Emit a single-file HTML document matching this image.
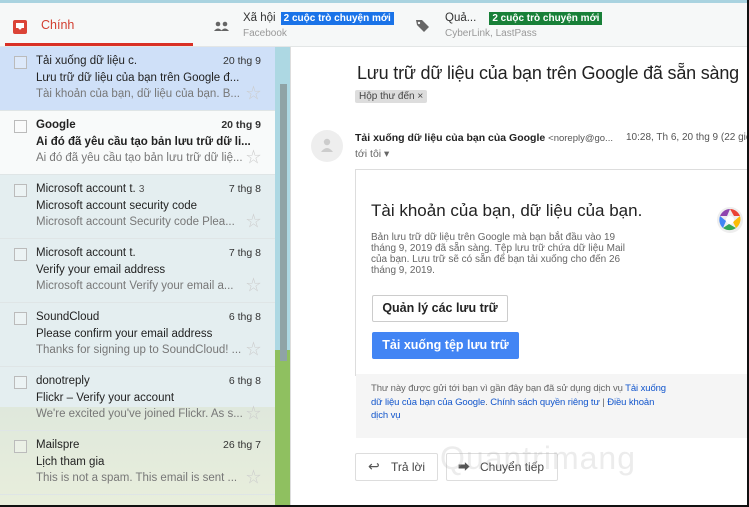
<!DOCTYPE html>
<html><head><meta charset="utf-8"><style>
*{box-sizing:border-box;margin:0;padding:0}
body{width:749px;height:507px;overflow:hidden;background:#fff;font-family:"Liberation Sans","Noto Sans CJK SC",sans-serif;position:relative}
.abs{position:absolute}
.top{left:0;top:0;width:749px;height:3px;background:#a9d3e0}
.tabs{left:0;top:3px;width:749px;height:44px;background:#f6f8f8;border-bottom:1px solid #e3e6e6}
.row{position:absolute;left:0;width:275px;height:64px;border-bottom:1px solid #dfe5e6;font-size:11.5px}
.cb{position:absolute;left:14px;top:9px;width:13px;height:13px;border:1px solid #bbb;background:rgba(255,255,255,.3)}
.s{position:absolute;left:36px;top:8px;color:#222}
.d{position:absolute;right:14px;top:8px;font-size:10.5px;color:#333}
.sub{position:absolute;left:36px;top:25px;color:#222;white-space:nowrap}
.sn{position:absolute;left:36px;top:41px;color:#777;white-space:nowrap}
.st{position:absolute;left:246px;top:35px;color:#ccc;font-size:15px}
b{font-weight:bold}
.badge{display:inline-block;color:#fff;font-size:10px;font-weight:bold;padding:1px 3px;margin-left:5px}
</style></head><body>
<div class="abs top"></div>
<div class="abs tabs">
 <svg class="abs" style="left:12px;top:16px" width="16" height="16"><rect x="1" y="1" width="14" height="14" rx="2" fill="#db4437"/><path d="M4 4h8v5h-2.5a1.5 1.5 0 0 1-3 0H4z" fill="#fff"/></svg>
 <div class="abs" style="left:41px;top:15px;color:#d23f31;font-size:12.5px">Chính</div>
 <div class="abs" style="left:5px;top:40px;width:188px;height:3px;background:#d93025"></div>
 <svg class="abs" style="left:214px;top:18px" width="16" height="10"><circle cx="4" cy="3" r="2.3" fill="#666"/><circle cx="11" cy="3" r="2.3" fill="#666"/><path d="M0 10q4-5 8 0zM7 10q4-5 8 0z" fill="#666"/></svg>
 <div class="abs" style="left:243px;top:9px;font-size:11.5px;color:#333">Xã hội<span class="badge" style="background:#1a73e8">2 cuộc trò chuyện mới</span></div>
 <div class="abs" style="left:243px;top:25px;font-size:10px;color:#999">Facebook</div>
 <svg class="abs" style="left:415px;top:16px" width="16" height="14"><path d="M1 1h6l7 7-5 5-7-7z" fill="#666"/><circle cx="4" cy="4" r="1.2" fill="#f6f8f8"/></svg>
 <div class="abs" style="left:445px;top:9px;font-size:11.5px;color:#333">Quả...<span class="badge" style="background:#188038;margin-left:13px">2 cuộc trò chuyện mới</span></div>
 <div class="abs" style="left:445px;top:25px;font-size:10px;color:#999">CyberLink, LastPass</div>
</div>
<div class="abs" style="left:0;top:47px;width:275px;height:458px;background:linear-gradient(#e4eef0 0,#e4eef0 360px,#dfe8dc 360px,#e8eedc 458px)"></div>
<div class="abs" style="left:275px;top:47px;width:15px;height:458px;background:#add8e3"></div>
<div class="abs" style="left:275px;top:350px;width:15px;height:155px;background:#8fc060"></div>
<div class="abs" style="left:280px;top:84px;width:7px;height:277px;background:#8fa3a6"></div>
<div class="abs" style="left:290px;top:47px;width:1px;height:458px;background:#ddd"></div>

<div class="row" style="top:47px;background:#cfe0f8"><div class="cb"></div><div class="s">Tải xuống dữ liệu c.</div><div class="d">20 thg 9</div><div class="sub">Lưu trữ dữ liệu của bạn trên Google đ...</div><div class="sn">Tài khoản của bạn, dữ liệu của bạn. B...</div><div class="st">☆</div></div>
<div class="row" style="top:111px;background:#f8fafa"><div class="cb"></div><div class="s"><b>Google</b></div><div class="d"><b>20 thg 9</b></div><div class="sub"><b>Ai đó đã yêu cầu tạo bản lưu trữ dữ li...</b></div><div class="sn">Ai đó đã yêu cầu tạo bản lưu trữ dữ liệ...</div><div class="st">☆</div></div>
<div class="row" style="top:175px"><div class="cb"></div><div class="s">Microsoft account t. <span style="font-size:10px;color:#555">3</span></div><div class="d">7 thg 8</div><div class="sub">Microsoft account security code</div><div class="sn">Microsoft account Security code Plea...</div><div class="st">☆</div></div>
<div class="row" style="top:239px"><div class="cb"></div><div class="s">Microsoft account t.</div><div class="d">7 thg 8</div><div class="sub">Verify your email address</div><div class="sn">Microsoft account Verify your email a...</div><div class="st">☆</div></div>
<div class="row" style="top:303px"><div class="cb"></div><div class="s">SoundCloud</div><div class="d">6 thg 8</div><div class="sub">Please confirm your email address</div><div class="sn">Thanks for signing up to SoundCloud! ...</div><div class="st">☆</div></div>
<div class="row" style="top:367px"><div class="cb"></div><div class="s">donotreply</div><div class="d">6 thg 8</div><div class="sub">Flickr – Verify your account</div><div class="sn">We're excited you've joined Flickr. As s...</div><div class="st">☆</div></div>
<div class="row" style="top:431px"><div class="cb"></div><div class="s">Mailspre</div><div class="d">26 thg 7</div><div class="sub">Lịch tham gia</div><div class="sn">This is not a spam. This email is sent ...</div><div class="st">☆</div></div>

<div class="abs" style="left:357px;top:63px;font-size:18px;color:#222;white-space:nowrap;letter-spacing:-0.2px">Lưu trữ dữ liệu của bạn trên Google đã sẵn sàng</div>
<div class="abs" style="left:355px;top:90px;background:#ddd;font-size:10px;color:#444;padding:1px 4px;border-radius:2px">Hộp thư đến ×</div>
<div class="abs" style="left:311px;top:130px;width:32px;height:32px;border-radius:50%;background:#eee"></div>
<svg class="abs" style="left:319px;top:137px" width="16" height="16"><circle cx="8" cy="5" r="3.2" fill="#ccc"/><path d="M2 15q6-8 12 0z" fill="#ccc"/></svg>
<div class="abs" style="left:355px;top:132px;font-size:10.5px;color:#222;white-space:nowrap"><b>Tải xuống dữ liệu của bạn của Google</b> <span style="font-size:9.5px;color:#555">&lt;noreply@go...</span></div>
<div class="abs" style="left:626px;top:132px;font-size:10px;color:#555;white-space:nowrap">10:28, Th 6, 20 thg 9 (22 giờ</div>
<div class="abs" style="left:355px;top:148px;font-size:10.5px;color:#666">tới tôi ▾</div>
<div class="abs" style="left:355px;top:169px;width:392px;height:207px;border:1px solid #ddd;border-right:none;border-bottom:none"></div>
<div class="abs" style="left:356px;top:374px;width:391px;height:64px;background:#f5f5f5"></div>
<div class="abs" style="left:371px;top:201px;font-size:17px;color:#222;white-space:nowrap">Tài khoản của bạn, dữ liệu của bạn.</div>
<svg class="abs" style="left:716px;top:206px" width="28" height="28" viewBox="0 0 28 28"><circle cx="14" cy="14" r="13" fill="#eee"/><path d="M14 3a11 11 0 0 1 10 7l-6 0z" fill="#ea4335"/><path d="M24 10a11 11 0 0 1-4 12l-3-6z" fill="#fbbc05"/><path d="M20 22a11 11 0 0 1-13 0l6-4z" fill="#34a853"/><path d="M7 22a11 11 0 0 1-3-12l6 5z" fill="#4285f4"/><path d="M4 10a11 11 0 0 1 10-7l-3 7z" fill="#8e44ad"/><circle cx="14" cy="14" r="4" fill="#fff"/></svg>
<div class="abs" style="left:371px;top:232px;width:268px;font-size:10px;line-height:11px;color:#666">Bản lưu trữ dữ liệu trên Google mà bạn bắt đầu vào 19 tháng 9, 2019 đã sẵn sàng. Tệp lưu trữ chứa dữ liệu Mail của bạn. Lưu trữ sẽ có sẵn để bạn tải xuống cho đến 26 tháng 9, 2019.</div>
<div class="abs" style="left:372px;top:295px;width:136px;height:27px;border:1px solid #ccc;border-radius:2px;font-size:12.5px;font-weight:bold;color:#222;text-align:center;line-height:25px">Quản lý các lưu trữ</div>
<div class="abs" style="left:372px;top:332px;width:147px;height:27px;background:#4285f4;border-radius:2px;font-size:12.5px;font-weight:bold;color:#fff;text-align:center;line-height:27px">Tải xuống tệp lưu trữ</div>
<div class="abs" style="left:371px;top:382px;width:295px;font-size:9.5px;line-height:13.5px;color:#666;letter-spacing:-0.1px">Thư này được gửi tới bạn vì gần đây bạn đã sử dụng dịch vụ <span style="color:#15c">Tải xuống dữ liệu của bạn của Google</span>. <span style="color:#15c">Chính sách quyền riêng tư</span> | <span style="color:#15c">Điều khoản dịch vụ</span></div>
<div class="abs" style="left:355px;top:453px;width:83px;height:28px;border:1px solid #ddd;border-radius:2px;font-size:12px;color:#444;line-height:26px;padding-left:35px">Trả lời</div>
<div class="abs" style="left:368px;top:458px;color:#555;font-size:14px">↩</div>
<div class="abs" style="left:446px;top:453px;width:112px;height:28px;border:1px solid #ddd;border-radius:2px;font-size:12px;color:#444;line-height:26px;padding-left:33px">Chuyển tiếp</div>
<div class="abs" style="left:458px;top:458px;color:#555;font-size:12px">➡</div>
<div class="abs" style="left:440px;top:440px;font-size:32px;color:rgba(180,180,180,.25);letter-spacing:1px">Quantrimang</div>
<div class="abs" style="left:747px;top:0;width:2px;height:507px;background:#111"></div>
<div class="abs" style="left:0;top:505px;width:749px;height:2px;background:#111"></div>
</body></html>
